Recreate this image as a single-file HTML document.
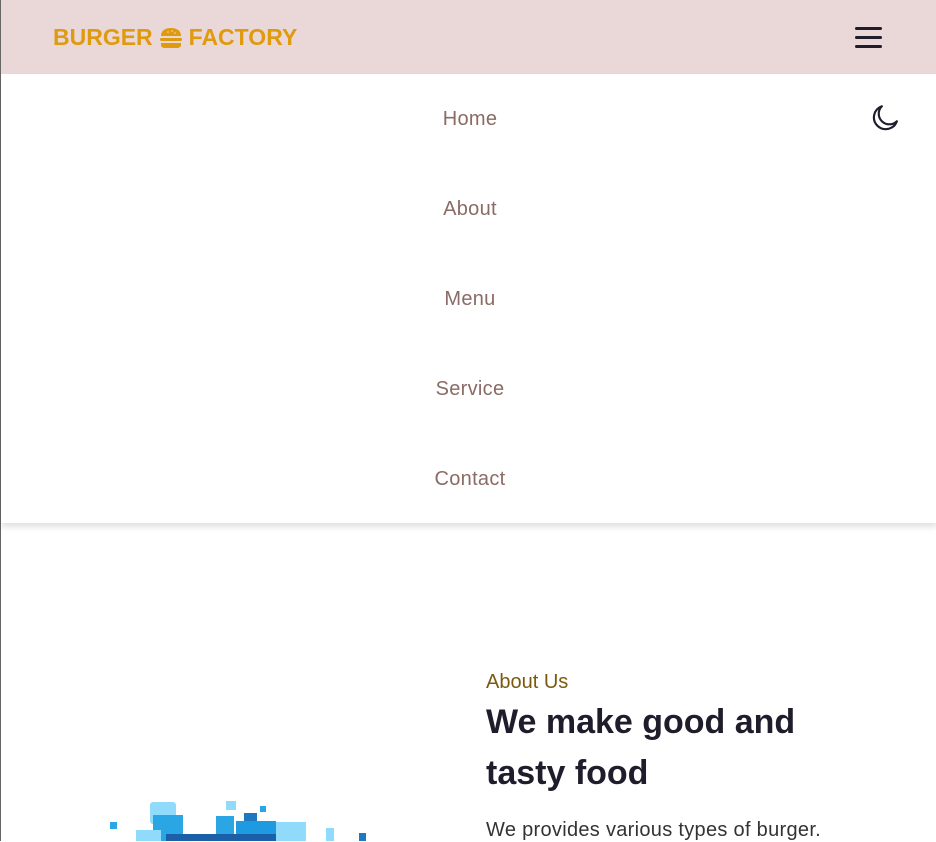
<!DOCTYPE html>
<html><head><style>
*{margin:0;padding:0;box-sizing:border-box}
body{width:936px;height:841px;overflow:hidden;background:#fff;font-family:"Liberation Sans",sans-serif;position:relative;border-left:1px solid #666}
.hdr{position:absolute;left:0;top:0;width:936px;height:74px;background:#ead8d9}
.logo{position:absolute;left:52px;top:24px;font-size:23px;font-weight:bold;color:#e09a0e;letter-spacing:0;display:flex;align-items:center;gap:6px}
.ham{position:absolute;left:854px;top:27px;width:27px}
.ham div{height:3px;background:#1f1d2b;border-radius:2px;margin-bottom:6px}
.nav{position:absolute;left:0;top:74px;width:936px;height:449px;background:#fff;box-shadow:0 4px 6px rgba(0,0,0,.12)}
.nav a{position:absolute;left:0;width:938px;text-align:center;font-size:20px;color:#8a6b65;text-decoration:none;letter-spacing:0.3px}
.moon{position:absolute;left:868px;top:103px}
.sub{position:absolute;left:485px;top:671px;font-size:20px;color:#7a5a10}
h1{position:absolute;left:485px;top:697px;font-size:34px;line-height:51px;color:#1f1d2b;font-weight:bold;width:360px}
.p{position:absolute;left:485px;top:819px;font-size:20px;color:#333;letter-spacing:0.3px}
</style></head><body>
<div class="hdr">
<div class="logo">BURGER
<svg width="24" height="22" viewBox="0 0 24 22"><path d="M2 9C2 3 7 1 12 1s10 2 10 8z" fill="#e09a0e"/><rect x="1" y="11" width="22" height="3" rx="1.5" fill="#e09a0e"/><path d="M2 16h20v2c0 2-2 3-4 3H6c-2 0-4-1-4-3z" fill="#e09a0e"/><circle cx="9" cy="5" r=".8" fill="#ead8d9"/><circle cx="13" cy="4" r=".8" fill="#ead8d9"/><circle cx="16" cy="6" r=".8" fill="#ead8d9"/></svg>
FACTORY</div>
<div class="ham"><div></div><div></div><div></div></div>
</div>
<div class="nav">
<a style="top:34px">Home</a><a style="top:124px">About</a><a style="top:214px">Menu</a><a style="top:304px">Service</a><a style="top:394px">Contact</a>
</div>
<svg class="moon" width="30" height="30" viewBox="0 0 28 28"><path d="M12 3A11 11 0 1 0 26 17A9 9 0 0 1 12 3z" fill="none" stroke="#1f1d2b" stroke-width="2" stroke-linejoin="round"/></svg>
<div class="sub">About Us</div>
<h1>We make good and tasty food</h1>
<div class="p">We provides various types of burger.</div>
<svg style="position:absolute;left:95px;top:800px" width="280" height="41">
<rect x="54" y="2" width="26" height="22" rx="3" fill="#90dafb"/>
<rect x="130" y="1" width="10" height="9" fill="#90dafb"/>
<rect x="148" y="13" width="13" height="13" fill="#1e78c0"/>
<rect x="164" y="6" width="6" height="6" fill="#29a6e3"/>
<rect x="14" y="22" width="7" height="7" fill="#29a6e3"/>
<rect x="57" y="15" width="30" height="26" fill="#29a6e3"/>
<rect x="40" y="30" width="25" height="11" fill="#90dafb"/>
<rect x="120" y="16" width="18" height="25" fill="#29a6e3"/>
<rect x="140" y="21" width="40" height="20" fill="#1e9ae0"/>
<rect x="180" y="22" width="30" height="19" fill="#90dafb"/>
<rect x="230" y="28" width="8" height="13" fill="#90dafb"/>
<rect x="263" y="33" width="7" height="8" fill="#1e78c0"/>
<rect x="70" y="34" width="110" height="7" fill="#1a5fa8"/>
</svg>
</body></html>
